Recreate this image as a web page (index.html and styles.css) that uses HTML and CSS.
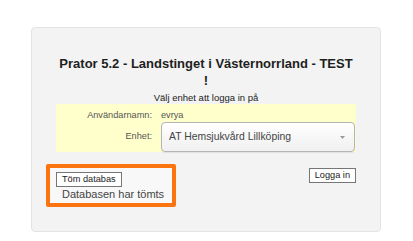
FILE: index.html
```html
<!DOCTYPE html>
<html lang="sv">
<head>
    <meta charset="UTF-8">
    <meta name="viewport" content="width=device-width, initial-scale=1.0">
    <title>Prator - Logga in</title>
    <link rel="stylesheet" href="styles.css">
</head>
<body>
    <div class="login-box">
        <h1 class="title">Prator 5.2 - Landstinget i Västernorrland - TEST !</h1>
        <p class="subtitle">Välj enhet att logga in på</p>

        <div class="fields">
            <div class="field-row">
                <span class="label">Användarnamn:</span>
                <span class="value">evrya</span>
            </div>
            <div class="field-row unit-row">
                <span class="label">Enhet:</span>
                <div class="unit-select">
                    <span>AT Hemsjukvård Lillköping</span>
                    <svg class="arrow" width="5" height="3" viewBox="0 0 5 3"><path d="M0 0h5L2.5 3z" fill="#9a9a9a"/></svg>
                </div>
            </div>
        </div>

        <div class="actions">
            <div class="db-notice">
                <button class="btn">Töm databas</button>
                <div class="db-msg">Databasen har tömts</div>
            </div>
            <button class="btn">Logga in</button>
        </div>
    </div>
</body>
</html>
```

FILE: styles.css
```css
* { margin: 0; padding: 0; box-sizing: border-box; font-family: "Liberation Sans", Arial, sans-serif; }
body { background: #fff; }
.login-box { width: 350px; margin: 27px 0 0 31px; padding: 27px 24px 24px; background: #f3f3f3; border: 1px solid #e3e3e3; border-radius: 4px; }
.title { font-size: 13px; line-height: 17px; font-weight: bold; color: #1e1e1e; text-align: center; padding: 0 2px; }
.subtitle { font-size: 9.5px; line-height: 11px; color: #222; text-align: center; margin-top: 3px; }
.fields { margin-top: 1px; background: #ffffcc; padding-right: 1px; }
.field-row { display: flex; gap: 9px; font-size: 9.2px; line-height: 12px; color: #555; padding-top: 5px; height: 18px; }
.field-row .label { width: 96px; text-align: right; }
.unit-row { height: 30px; padding-top: 0; align-items: center; }
.unit-row .label { margin-top: -2px; }
.unit-select { width: 194px; height: 30px; display: flex; align-items: center; justify-content: space-between; padding: 0 9px 0 7px; font-size: 10.4px; color: #444; border: 1px solid #b4b4b4; border-radius: 4px; background: linear-gradient(#fff, #f0f0f0); box-shadow: 0 1px 1px rgba(0, 0, 0, 0.08); }
.actions { display: flex; justify-content: space-between; align-items: flex-start; margin: 12px 0 0 -10px; }
.db-notice { width: 130px; padding: 0 0 1px 6px; border: 4px solid #fb7410; border-radius: 2px; background: #f8f8f8; }
.db-msg { font-size: 11px; line-height: 15px; color: #444; padding-left: 6px; }
.btn { height: 15px; padding: 0 5px; font-size: 9.2px; line-height: 13px; color: #222; background: #fff; border: 1px solid #767676; border-radius: 0; }
.actions > .btn { margin-top: 4px; }
```
